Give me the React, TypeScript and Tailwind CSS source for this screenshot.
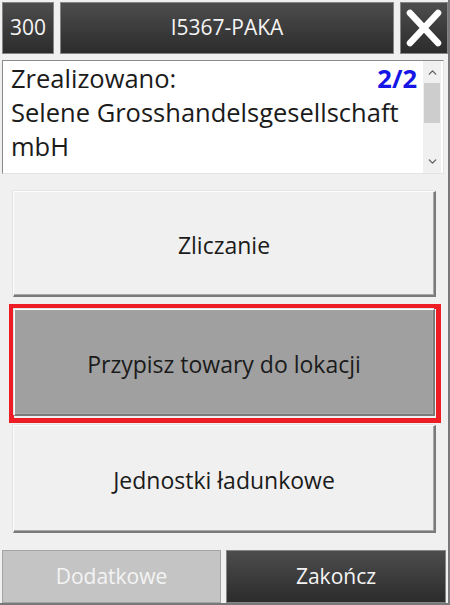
import { ChevronDown, ChevronUp } from 'lucide-react'

const font = { fontFamily: '"Open Sans", "Noto Sans", sans-serif' }

function DarkBox({ className, children }: { className: string; children?: React.ReactNode }) {
  return (
    <div
      className={`flex items-center justify-center border border-[#858585] bg-gradient-to-b from-[#4d4d4d] to-[#2c2c2c] text-[#f4f4f4] ${className}`}
    >
      {children}
    </div>
  )
}

function RaisedButton({ label, active }: { label: string; active?: boolean }) {
  return (
    <button
      className={`flex items-center justify-center w-full h-full pt-[4px] border-t border-l border-r-2 border-b-2 border-t-[#fdfdfd] border-l-[#fdfdfd] border-r-[#7a7a7a] border-b-[#7a7a7a] shadow-[inset_-1px_-1px_0_#a8a8a8,-1px_-1px_0_#e3e3e3] text-[23px] text-[#1b1b1b] ${
        active ? 'bg-[#a0a0a0] border-t-[#c4c4c4] border-l-[#c4c4c4]' : 'bg-[#f0f0f0]'
      }`}
    >
      {label}
    </button>
  )
}

export default function App() {
  return (
    <div
      className="w-[450px] h-[605px] bg-[#f0f0f0] flex flex-col border-r-2 border-b-2 border-[#787878] overflow-hidden"
      style={font}
    >
      <div className="flex gap-[6px] pt-[2px] pl-[2px]">
        <DarkBox className="w-[52px] h-[52px] text-[21px]">300</DarkBox>
        <DarkBox className="w-[334px] h-[52px] text-[21px]">I5367-PAKA</DarkBox>
        <DarkBox className="w-[48px] h-[52px]">
          <svg width="40" height="40" viewBox="0 0 40 40">
            <path d="M6 5 L34 35 M34 5 L6 35" stroke="#ffffff" strokeWidth="6.5" strokeLinecap="round" />
          </svg>
        </DarkBox>
      </div>

      <div className="mt-[6px] ml-[2px] w-[442px] h-[114px] bg-white border border-[#8a8a8a] border-b-[#e3e3e3] border-r-[#e3e3e3] flex">
        <div className="flex-1 pl-[8px] pr-[6px] text-[25.5px] leading-[34px] text-[#1b1b1b]">
          <div className="flex justify-between">
            <span>Zrealizowano:</span>
            <span className="font-bold text-[#1515e6]">2/2</span>
          </div>
          <div className="whitespace-nowrap">Selene Grosshandelsgesellschaft</div>
          <div>mbH</div>
        </div>
        <div className="w-[18px] mr-[2px] bg-[#f0f0f0] flex flex-col items-center">
          <div className="h-[22px] flex items-center justify-center">
            <ChevronUp size={13} strokeWidth={2.5} className="text-[#606060]" />
          </div>
          <div className="w-[16px] h-[40px] bg-[#cdcdcd]" />
          <div className="flex-1" />
          <div className="h-[22px] flex items-center justify-center">
            <ChevronDown size={13} strokeWidth={2.5} className="text-[#606060]" />
          </div>
        </div>
      </div>

      <div className="mt-[17px] ml-[13px] w-[423px] h-[107px]">
        <RaisedButton label="Zliczanie" />
      </div>

      <div className="mt-[7px] ml-[9px] w-[432px] h-[119px] border-[5px] border-[#ee1c25] pr-[1px] pb-[2px]">
        <RaisedButton label="Przypisz towary do lokacji" active />
      </div>

      <div className="mt-[2px] ml-[13px] w-[423px] h-[108px]">
        <RaisedButton label="Jednostki ładunkowe" />
      </div>

      <div className="mt-[17px] ml-[2px] flex gap-[5px]">
        <div className="w-[219px] h-[53px] flex items-center justify-center bg-[#c4c4c4] border border-[#a4a4a4] text-[21px] text-[#f4f4f4]">
          Dodatkowe
        </div>
        <DarkBox className="w-[220px] h-[53px] text-[21px]">Zakończ</DarkBox>
      </div>
    </div>
  )
}
